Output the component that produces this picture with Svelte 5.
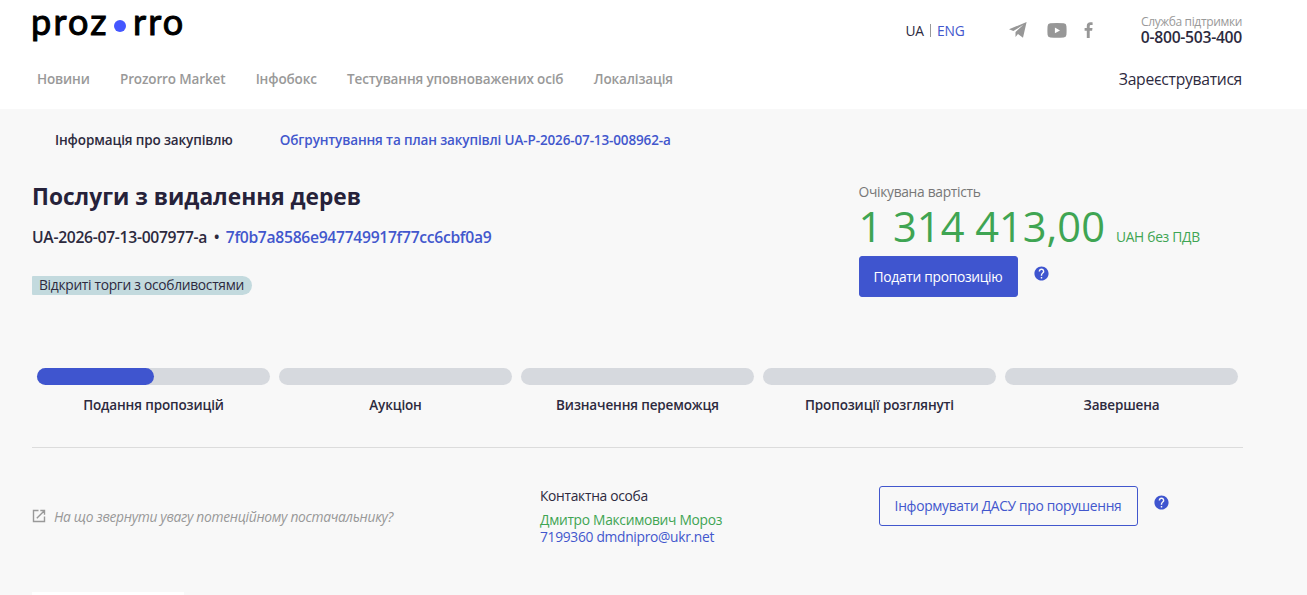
<script>
  const nav = ['Новини', 'Prozorro Market', 'Інфобокс', 'Тестування уповноважених осіб', 'Локалізація'];
  const steps = [
    { name: 'Подання пропозицій', progress: 50 },
    { name: 'Аукціон', progress: 0 },
    { name: 'Визначення переможця', progress: 0 },
    { name: 'Пропозиції розглянуті', progress: 0 },
    { name: 'Завершена', progress: 0 }
  ];
</script>

{#snippet help()}
  <svg class="help" viewBox="0 0 24 24" width="17" height="17">
    <path d="M12 2C6.48 2 2 6.48 2 12s4.480 10 10 10 10-4.480 10-10S17.520 2 12 2zm1 17h-2v-2h2v2zm2.070-7.750l-.9.920C13.450 12.900 13 13.500 13 15h-2v-.5c0-1.100.45-2.100 1.170-2.830l1.240-1.260c.37-.36.59-.86.59-1.410 0-1.100-.9-2-2-2s-2 .9-2 2H8c0-2.210 1.790-4 4-4s4 1.790 4 4c0 .88-.36 1.680-.93 2.250z" />
  </svg>
{/snippet}

<header>
  <div class="top">
    <a class="logo" href="#home"><span class="l1">proz</span><i></i><span class="l2">rro</span></a>
    <div class="utils">
      <div class="lang"><span>UA</span><a href="#eng">ENG</a></div>
      <div class="social">
        <svg width="18" height="16" viewBox="0 0 18 16"><path d="M17.600.1 0 7.200l4.400 1.900L14.400 2.800 6.500 10v4.900l2.500-3 5 3.800z" /></svg>
        <svg width="20" height="15" viewBox="0 0 20 15"><path fill-rule="evenodd" d="M3.300.3Q10-.3 16.700.3 19.300.5 19.400 3q.4 4.500 0 9-.2 2.400-2.700 2.500-6.700.6-13.400 0Q.8 14.400.6 12q-.4-4.500 0-9Q.8.500 3.300.3zM7.900 4.500v5.800L13 7.400z" /></svg>
        <svg width="10" height="16" viewBox="0 0 10 16"><path d="M2.800 16V8.700H.6V5.900h2.200V4C2.800 1.500 4.200.3 6.400.3c1 0 1.900.1 2.200.1v2.500H7.100c-1.200 0-1.400.6-1.400 1.400v1.600h2.800l-.4 2.800H5.700V16z" /></svg>
      </div>
      <div class="support"><small>Служба підтримки</small><b>0-800-503-400</b></div>
    </div>
  </div>
  <div class="bottom">
    <nav>
      {#each nav as item}<a href="#nav">{item}</a>{/each}
    </nav>
    <a class="register" href="#register">Зареєструватися</a>
  </div>
</header>

<main>
  <div class="tabs">
    <span>Інформація про закупівлю</span>
    <a href="#plan">Обгрунтування та план закупівлі UA-P-2026-07-13-008962-a</a>
  </div>

  <section class="tender">
    <div class="info">
      <h1>Послуги з видалення дерев</h1>
      <div class="ids"><span>UA-2026-07-13-007977-a</span><em>•</em><a href="#id">7f0b7a8586e947749917f77cc6cbf0a9</a></div>
      <span class="tag">Відкриті торги з особливостями</span>
    </div>
    <div class="value">
      <div class="label">Очікувана вартість</div>
      <div class="amount"><strong>1 314 413,00</strong><span>UAH без ПДВ</span></div>
      <div class="action"><button class="primary">Подати пропозицію</button>{@render help()}</div>
    </div>
  </section>

  <section class="steps">
    {#each steps as step}
      <div class="step">
        <div class="track">{#if step.progress}<div class="fill" style="width: {step.progress}%"></div>{/if}</div>
        <div class="name">{step.name}</div>
      </div>
    {/each}
  </section>

  <section class="details">
    <a class="hint" href="#hint">
      <svg width="14" height="14" viewBox="0 0 14 14" fill="none" stroke="#999" stroke-width="1.400"><path d="M6.500 1.500H1.500v11h11V7.500M8.300 1.500h4.200V5.700M12.300 1.700 4.800 9.200" /></svg>
      На що звернути увагу потенційному постачальнику?
    </a>
    <div class="contact">
      <div class="head">Контактна особа</div>
      <div class="person">Дмитро Максимович Мороз</div>
      <div class="reach">7199360 dmdnipro@ukr.net</div>
    </div>
    <div class="report"><button class="outline">Інформувати ДАСУ про порушення</button>{@render help()}</div>
  </section>
  <div class="sheet"></div>
</main>

<style>
  :global(body) { margin: 0; background: #f8f8f8; overflow: hidden; }
  :global(#app) { font-family: "Open Sans", sans-serif; font-size: 13.800px; letter-spacing: -0.3px; color: #2d2a3e; }
  a { color: #4257cd; text-decoration: none; }
  header { height: 109px; background: #fff; padding: 0 65px 0 32px; box-sizing: border-box; }
  .top { height: 62px; display: flex; justify-content: space-between; }
  .logo { display: flex; height: 50px; font: 400 36px/42px Lato, sans-serif; letter-spacing: 2.200px; color: #000; -webkit-text-stroke: 1px #000; }
  .l1 { width: 75px; margin-left: -1px; margin-right: 1px; }
  .logo i { width: 12px; height: 12px; border-radius: 50%; background: #4457ff; margin: 20px 7px 0; }
  .utils { display: flex; }
  .lang { display: flex; align-items: center; height: 62px; line-height: 20px; letter-spacing: -0.1px; }
  .lang a { margin-left: 6px; padding-left: 7px; position: relative; }
  .lang a::before { content: ""; position: absolute; left: 0; top: 3px; height: 13px; width: 1px; background: #999; }
  .social { display: flex; align-items: center; height: 60px; margin-left: 44px; gap: 20px; }
  .social svg { fill: #979797; }
  .social svg:last-child { margin-left: -3px; }
  .support { display: flex; flex-direction: column; margin-left: 47px; padding-top: 13px; text-align: right; }
  .support small { font-size: 12px; line-height: 17px; color: #999; letter-spacing: -0.360px; }
  .support b { font-size: 15.700px; line-height: 15px; font-weight: 600; letter-spacing: -0.280px; }
  .bottom { display: flex; justify-content: space-between; line-height: 35px; padding-left: 5px; }
  nav { display: flex; gap: 30.300px; line-height: 34px; font-size: 13.500px; letter-spacing: -0.14px; }
  nav a { color: #999; font-weight: 600; }
  .register { color: #2d2a3e; font-size: 15.700px; letter-spacing: -0.3px; }
  main { padding: 0 64px 0 32px; }
  .tabs { display: flex; gap: 47px; padding: 21px 23px 0; line-height: 20px; font-weight: 600; font-size: 13.500px; letter-spacing: -0.13px; }
  .tender { display: grid; grid-template-columns: 826.500px 1fr; padding-top: 31px; }
  h1 { font-size: 22.700px; letter-spacing: 0; line-height: 32px; margin: 0 0 -2px; font-weight: 700; color: #26223a; }
  .ids { display: flex; font-size: 15.700px; letter-spacing: -0.310px; line-height: 22px; font-weight: 600; margin-top: 15px; }
  .ids em { font-style: normal; margin: 0 6.500px; }
  .tag { display: inline-block; margin-top: 28px; height: 19px; line-height: 18px; padding: 0 8px 0 7px; background: #c3dade; border-radius: 1px 10px 10px 1px; }
  .label { line-height: 20px; height: 22px; padding-top: 1px; box-sizing: border-box; color: #777; }
  .amount { display: flex; align-items: baseline; color: #3fa553; line-height: 46px; height: 53px; }
  .amount strong { font-size: 41.600px; letter-spacing: 0; font-weight: 400; }
  .amount span { margin-left: 11px; }
  .action { display: flex; }
  button { font: 13.800px "Open Sans", sans-serif; letter-spacing: -0.3px; box-sizing: border-box; border: 1px solid #4257cd; border-radius: 3px; height: 41px; padding: 0; }
  .primary { width: 159px; background: #3f55cf; color: #fff; }
  .help { fill: #3f55cf; margin: 9px 0 0 15px; }
  .report .help { margin-top: 8px; }
  .steps { display: flex; gap: 9px; padding: 71px 5px 32px; border-bottom: 1px solid #dcdcdc; }
  .step { flex: 1; }
  .track { height: 17px; border-radius: 9px; background: #d6d9de; }
  .fill { height: 17px; border-radius: 9px; background: #3f55cf; }
  .name { text-align: center; font-weight: 600; font-size: 13.500px; letter-spacing: -0.14px; line-height: 20px; margin-top: 10px; }
  .details { display: grid; grid-template-columns: 508px 338.500px 1fr; padding-top: 38px; height: 106px; }
  .hint { display: flex; gap: 8px; align-items: center; height: 60px; color: #999; font-style: italic; }
  .contact { line-height: 17px; padding-top: 1px; }
  .head { margin-bottom: 7px; }
  .person { color: #3fa553; }
  .reach { color: #4257cd; }
  .report { display: flex; }
  .outline { width: 259px; height: 40px; background: transparent; color: #4257cd; padding-bottom: 2px; }
  .sheet { width: 152px; height: 3px; background: #fff; }
</style>
